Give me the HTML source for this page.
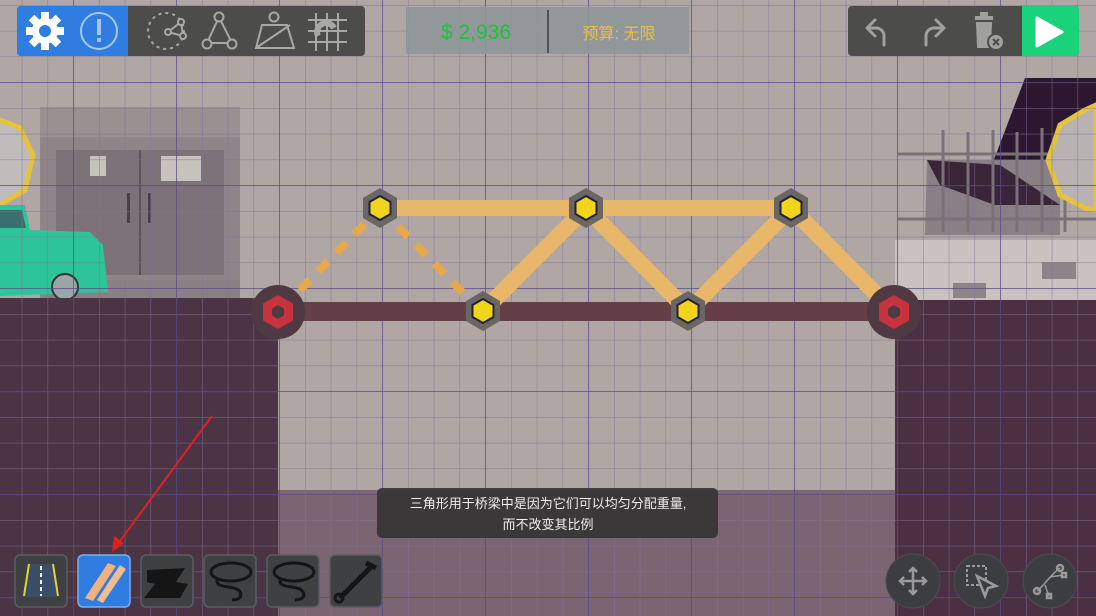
<!DOCTYPE html>
<html><head><meta charset="utf-8"><style>
html,body{margin:0;padding:0;width:1096px;height:616px;overflow:hidden;background:#aea5a3}
svg{display:block}
.t{font-family:"Liberation Sans","Noto Sans CJK SC",sans-serif}
</style></head><body>
<svg width="1096" height="616" viewBox="0 0 1096 616" xmlns="http://www.w3.org/2000/svg">
<defs>
<pattern id="minor" x="-4" y="5" width="25.75" height="25.75" patternUnits="userSpaceOnUse">
<path d="M0 0V25.75M0 0H25.75" stroke="#7e7298" stroke-width="1.2" fill="none" opacity="0.75"/>
</pattern>
<pattern id="major" x="73" y="-21" width="103" height="103" patternUnits="userSpaceOnUse">
<path d="M0 0V103M0 0H103" stroke="#4a3888" stroke-width="1.5" fill="none" opacity="0.7"/>
</pattern>
</defs>
<rect width="1096" height="616" fill="#b0a7a5"/>
<rect x="40" y="107" width="200" height="190" fill="#8f8588"/>
<rect x="40" y="107" width="200" height="30" fill="#9a9092"/>
<rect x="56" y="150" width="168" height="125" fill="#7d7277"/>
<line x1="140" y1="150" x2="140" y2="275" stroke="#5e5258" stroke-width="2"/>
<rect x="90" y="156" width="16" height="20" fill="#c8c2bc"/>
<rect x="161" y="156" width="40" height="25" fill="#c8c2bc"/>
<rect x="127" y="193" width="3" height="30" fill="#4a4046"/>
<rect x="148" y="193" width="3" height="30" fill="#4a4046"/>
<rect x="40" y="280" width="200" height="18" fill="#8a8084"/>
<polygon points="-5,118 20,128 33,155 25,190 0,205 -20,200 -20,120" fill="#c0bcbc" stroke="#e6c33c" stroke-width="5"/>
<path d="M0 205 L25 205 L30 230 L90 232 L103 245 L108 292 L0 296Z" fill="#2ec49a"/>
<path d="M0 210 L22 210 L26 228 L0 228Z" fill="#3c6e70"/>
<circle cx="65" cy="287" r="13" fill="#9aa6a8" stroke="#333" stroke-width="2"/>
<polygon points="1025,78 1096,78 1096,170 990,170" fill="#2d1730"/>
<rect x="895" y="240" width="201" height="65" fill="#c9c2c0"/>
<polygon points="927,160 1060,160 1060,235 925,235" fill="#8a7f84"/>
<polygon points="927,160 1000,165 1060,205 1060,205 995,205 940,185" fill="#3a2438"/>
<g stroke="#7a7078" stroke-width="3">
<line x1="898" y1="154" x2="1096" y2="154"/><line x1="898" y1="219" x2="1096" y2="219"/>
<line x1="943" y1="130" x2="943" y2="232"/><line x1="968" y1="132" x2="968" y2="232"/><line x1="993" y1="130" x2="993" y2="232"/><line x1="1017" y1="132" x2="1017" y2="232"/><line x1="1042" y1="128" x2="1042" y2="232"/><line x1="1065" y1="132" x2="1065" y2="232"/>
</g>
<rect x="953" y="283" width="33" height="15" fill="#8c8488"/>
<rect x="1042" y="262" width="34" height="17" fill="#8c8488"/>
<polygon points="1085,110 1096,105 1096,210 1085,208 1060,195 1048,160 1060,125" fill="#b8b2b2" stroke="#e6c33c" stroke-width="5"/>
<rect x="0" y="298" width="278" height="318" fill="#4b3545"/>
<rect x="895" y="300" width="201" height="316" fill="#4b3043"/>
<rect x="278" y="490" width="617" height="126" fill="#7c6572"/>
<rect width="1096" height="616" fill="url(#minor)"/>
<rect width="1096" height="616" fill="url(#major)"/>
<rect x="278" y="302" width="616" height="19" fill="#653f47"/>
<g stroke="#e8b76a" stroke-width="16">
<line x1="380" y1="208" x2="586" y2="208"/><line x1="586" y1="208" x2="791" y2="208"/>
<line x1="483" y1="311" x2="586" y2="208"/><line x1="586" y1="208" x2="688" y2="311"/>
<line x1="688" y1="311" x2="791" y2="208"/><line x1="791" y1="208" x2="894" y2="312"/>
</g>
<g stroke="#e6a848" stroke-width="8" stroke-dasharray="14 12">
<line x1="300" y1="290" x2="380" y2="208"/><line x1="380" y1="208" x2="470" y2="300"/>
</g>
<g>
<circle cx="278" cy="312" r="27" fill="#4f3a44"/>
<polygon points="278,295 293,303.5 293,320.5 278,329 263,320.5 263,303.5" fill="#c8323c"/>
<polygon points="278,305 284,308.5 284,315.5 278,319 272,315.5 272,308.5" fill="#4f3a44"/>
<circle cx="894" cy="312" r="27" fill="#4f3a44"/>
<polygon points="894,295 909,303.5 909,320.5 894,329 879,320.5 879,303.5" fill="#c8323c"/>
<polygon points="894,305 900,308.5 900,315.5 894,319 888,315.5 888,308.5" fill="#4f3a44"/>
</g>
<g>
<g transform="translate(380,208)"><polygon points="0,-20 17,-10 17,10 0,20 -17,10 -17,-10" fill="#6a6664"/><polygon points="0,-12 10.5,-6 10.5,6 0,12 -10.5,6 -10.5,-6" fill="#f2d41c" stroke="#223" stroke-width="2"/></g>
<g transform="translate(586,208)"><polygon points="0,-20 17,-10 17,10 0,20 -17,10 -17,-10" fill="#6a6664"/><polygon points="0,-12 10.5,-6 10.5,6 0,12 -10.5,6 -10.5,-6" fill="#f2d41c" stroke="#223" stroke-width="2"/></g>
<g transform="translate(791,208)"><polygon points="0,-20 17,-10 17,10 0,20 -17,10 -17,-10" fill="#6a6664"/><polygon points="0,-12 10.5,-6 10.5,6 0,12 -10.5,6 -10.5,-6" fill="#f2d41c" stroke="#223" stroke-width="2"/></g>
<g transform="translate(483,311)"><polygon points="0,-20 17,-10 17,10 0,20 -17,10 -17,-10" fill="#6a6664"/><polygon points="0,-12 10.5,-6 10.5,6 0,12 -10.5,6 -10.5,-6" fill="#f2d41c" stroke="#223" stroke-width="2"/></g>
<g transform="translate(688,311)"><polygon points="0,-20 17,-10 17,10 0,20 -17,10 -17,-10" fill="#6a6664"/><polygon points="0,-12 10.5,-6 10.5,6 0,12 -10.5,6 -10.5,-6" fill="#f2d41c" stroke="#223" stroke-width="2"/></g>
</g>
<rect x="17" y="6" width="348" height="50" rx="4" fill="#4c4c4a"/>
<path d="M21 6H128V56H21A4 4 0 0 1 17 52V10A4 4 0 0 1 21 6Z" fill="#2f7de0"/>
<g transform="translate(45,31)" fill="#fff">
<circle r="13"/>
<g><rect x="-4" y="-19" width="8" height="8"/><rect x="-4" y="11" width="8" height="8"/><rect x="-19" y="-4" width="8" height="8"/><rect x="11" y="-4" width="8" height="8"/></g>
<g transform="rotate(45)"><rect x="-4" y="-19" width="8" height="8"/><rect x="-4" y="11" width="8" height="8"/><rect x="-19" y="-4" width="8" height="8"/><rect x="11" y="-4" width="8" height="8"/></g>
<circle r="6" fill="#2f7de0"/>
</g>
<circle cx="99" cy="31" r="18" fill="none" stroke="#a9c6ee" stroke-width="2"/>
<rect x="97" y="19" width="4" height="16" fill="#a9c6ee"/><rect x="97" y="38" width="4" height="4" fill="#a9c6ee"/>
<g stroke="#a8a8a6" stroke-width="2" fill="none">
<circle cx="166" cy="31" r="18" stroke-dasharray="3 4"/>
<path d="M168 32L181 22L183 36Z"/><circle cx="168" cy="32" r="3" fill="#4c4c4a"/><circle cx="181" cy="22" r="3" fill="#4c4c4a"/><circle cx="183" cy="36" r="3" fill="#4c4c4a"/>
<path d="M219 17L207 43H232Z"/><circle cx="219" cy="17" r="4.5" fill="#4c4c4a"/><circle cx="207" cy="44" r="4.5" fill="#4c4c4a"/><circle cx="232" cy="44" r="4.5" fill="#4c4c4a"/>
<path d="M262 25H287L294 48H256Z M256 48L290 25"/><circle cx="274" cy="17" r="4.5" fill="#4c4c4a"/>
<path d="M316 13V51M327 13V51M338 13V51M308 20H347M308 31H347M308 42H347"/>
</g>
<path d="M318 36A8 8 0 0 1 334 28" stroke="#a8a8a6" stroke-width="6" fill="none"/>
<rect x="406" y="7" width="283" height="47" fill="#8f9698" opacity="0.9"/>
<rect x="547" y="10" width="2" height="43" fill="#4e5456"/>
<text x="476" y="39" class="t" font-size="21" fill="#1fc23a" text-anchor="middle">$ 2,936</text>
<text x="619" y="39" class="t" font-size="16" fill="#e8c23a" text-anchor="middle">预算: 无限</text>
<rect x="848" y="6" width="231" height="50" rx="4" fill="#4c4c4a"/>
<path d="M1022 6H1075A4 4 0 0 1 1079 10V52A4 4 0 0 1 1075 56H1022Z" fill="#19d27a"/>
<polygon points="1037,18 1037,46 1062,32" fill="#fff" stroke="#fff" stroke-width="3" stroke-linejoin="round"/>
<g stroke="#a0a09e" stroke-width="3" fill="none" stroke-linejoin="round" stroke-linecap="round">
<path d="M884 45V36A8 8 0 0 0 876 28H867M875 20L867 28L875 36"/>
<path d="M926 45V36A8 8 0 0 1 934 28H944M936 20L944 28L936 36"/>
</g>
<rect x="975" y="16" width="18" height="4" fill="#a0a09e"/><rect x="980" y="12" width="8" height="4" fill="#a0a09e"/>
<path d="M976 22H992L991 48H977Z" fill="#a0a09e"/>
<circle cx="996" cy="42" r="8" fill="#a0a09e" stroke="#4c4c4a" stroke-width="2"/>
<path d="M993 39L999 45M999 39L993 45" stroke="#4c4c4a" stroke-width="2"/>
<rect x="377" y="488" width="341" height="50" rx="5" fill="#383636" opacity="0.95"/>
<text x="548" y="508" class="t" font-size="13" fill="#eee" text-anchor="middle">三角形用于桥梁中是因为它们可以均匀分配重量,</text>
<text x="548" y="529" class="t" font-size="13" fill="#eee" text-anchor="middle">而不改变其比例</text>
<g stroke="#5a5c66" stroke-width="1.5">
<rect x="15" y="555" width="52" height="52" rx="5" fill="#3e4042"/>
<rect x="78" y="555" width="52" height="52" rx="5" fill="#2f7de0" stroke="#7ab0f0"/>
<rect x="141" y="555" width="52" height="52" rx="5" fill="#3e4042"/>
<rect x="204" y="555" width="52" height="52" rx="5" fill="#3e4042"/>
<rect x="267" y="555" width="52" height="52" rx="5" fill="#3e4042"/>
<rect x="330" y="555" width="52" height="52" rx="5" fill="#3e4042"/>
</g>
<polygon points="29,564 53,564 58,597 23,597" fill="#3a4e68"/>
<path d="M29 564L24 596M53 564L58 596" stroke="#e6d236" stroke-width="2"/>
<path d="M41 566V596" stroke="#fff" stroke-width="2" stroke-dasharray="4 3"/>
<path d="M85 598L108 563L116 566L93 601Z" fill="#f0b080"/><path d="M97 600L120 565L126 569L103 603Z" fill="#f4bc8c"/>
<path d="M147 570L185 568L176 582L188 584L180 598L144 598L155 584L147 582Z" fill="#151515"/>
<g stroke="#151515" stroke-width="3" fill="none">
<ellipse cx="231" cy="572" rx="20" ry="9"/><path d="M218 578C212 590 236 584 240 592C244 600 232 600 232 600"/>
<ellipse cx="294" cy="572" rx="20" ry="9"/><path d="M281 578C275 590 299 584 303 592C307 600 295 600 295 600"/>
</g>
<path d="M340 598L372 566M366 563L376 568" stroke="#151515" stroke-width="5"/>
<circle cx="339" cy="598" r="4" fill="none" stroke="#151515" stroke-width="3"/>
<line x1="212" y1="416" x2="117" y2="545" stroke="#e02020" stroke-width="2"/>
<polygon points="112,552 114,536 124,543" fill="#e02020"/>
<g fill="#3c3d40" stroke="#4a4c52" stroke-width="1">
<circle cx="913" cy="581" r="27"/><circle cx="981" cy="581" r="27"/><circle cx="1050" cy="581" r="27"/>
</g>
<g stroke="#9a9a9a" stroke-width="2.5" fill="none">
<path d="M900 581H926M913 568V594M904 577L900 581L904 585M922 577L926 581L922 585M909 572L913 568L917 572M909 590L913 594L917 590"/>
<rect x="967" y="566" width="19" height="19" stroke-dasharray="3 2" stroke-width="2"/>
<path d="M977 576L996 586L988 588L985 596Z" fill="#3c3d40"/>
<path d="M1037 591C1045 585 1050 575 1060 568M1045 585L1049 596M1050 577L1063 575" stroke-width="1.5"/>
<circle cx="1037" cy="591" r="3"/><circle cx="1060" cy="568" r="3"/><rect x="1062" y="573" width="4" height="4"/><rect x="1047" y="594" width="4" height="4"/>
</g>
</svg>
</body></html>
